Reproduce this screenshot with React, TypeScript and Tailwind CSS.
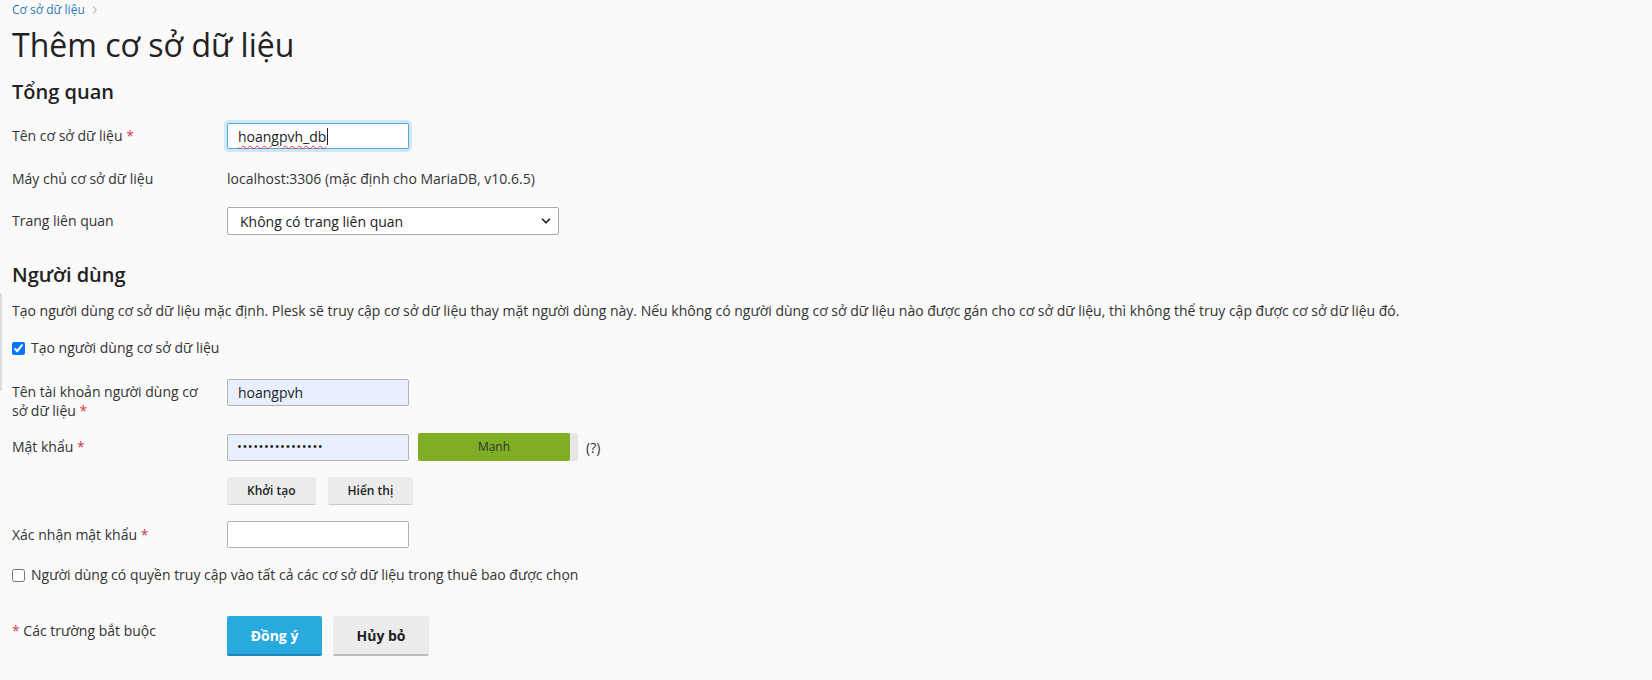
import { ChevronRight, ChevronDown } from "lucide-react";

const font = { fontFamily: '"Open Sans", "Noto Sans", sans-serif' };

function Req() {
  return <span className="text-[#d23f4f]"> *</span>;
}

function Row({ label, children }: { label: React.ReactNode; children: React.ReactNode }) {
  return (
    <div className="flex items-center">
      <div className="w-[215px] shrink-0 pr-6 text-[14px] leading-[20px] text-[#333]">{label}</div>
      <div className="flex items-center">{children}</div>
    </div>
  );
}

function GrayButton({ text, size = "sm" }: { text: string; size?: "sm" | "lg" }) {
  if (size === "lg") {
    return (
      <button className="h-[40px] w-[96px] rounded-[2px] border-b-2 border-b-[#bdbdbd] bg-[#ececec] text-[14px] font-bold text-[#222]">
        {text}
      </button>
    );
  }
  return (
    <button className="h-[28px] rounded-[2px] border-b border-b-[#c9c9c9] bg-[#ececec] px-[20px] text-[12px] font-semibold text-[#222]">
      {text}
    </button>
  );
}

export default function App() {
  return (
    <div style={font} className="relative min-h-[680px] w-full bg-[#fafafa] pl-3 text-[#222]">
      <div className="absolute left-0 top-[293px] h-[98px] w-[2px] bg-[#dedede]" />

      {/* breadcrumb */}
      <div className="flex items-center gap-1 pt-[2px] text-[12px] leading-[16px] text-[#2b7bb3]">
        <span>Cơ sở dữ liệu</span>
        <ChevronRight size={12} className="text-[#999]" />
      </div>

      <h1 className="mt-[5px] text-[32px] font-normal leading-[44px] text-[#222]">Thêm cơ sở dữ liệu</h1>

      <h2 className="mt-[11px] text-[20px] font-semibold leading-[28px] text-[#222]">Tổng quan</h2>

      <div className="mt-[17px]">
        <Row label={<>Tên cơ sở dữ liệu<Req /></>}>
          <div className="flex h-[26px] w-[182px] items-center rounded-[2px] border border-[#5ba9dc] bg-white px-[10px] text-[14px] text-[#222] shadow-[0_0_0_3px_#cfe7f8]">
            <span className="underline decoration-[#e0383e] decoration-wavy decoration-1 underline-offset-[3px]">hoangpvh_db</span>
            <span className="ml-[1px] h-[17px] w-[1px] bg-[#222]" />
          </div>
        </Row>
      </div>

      <div className="mt-[20px]">
        <Row label="Máy chủ cơ sở dữ liệu">
          <span className="text-[14px] leading-[20px] text-[#333]">localhost:3306 (mặc định cho MariaDB, v10.6.5)</span>
        </Row>
      </div>

      <div className="mt-[18px]">
        <Row label="Trang liên quan">
          <div className="flex h-[28px] w-[332px] items-center justify-between rounded-[2px] border border-[#a9a9a9] bg-white pl-[12px] pr-[5px] text-[14px] text-[#222]">
            <span>Không có trang liên quan</span>
            <ChevronDown size={14} strokeWidth={3} className="text-[#222]" />
          </div>
        </Row>
      </div>

      <h2 className="mt-[26px] text-[20px] font-semibold leading-[28px] text-[#222]">Người dùng</h2>

      <p className="mt-[12px] text-[14px] leading-[20px] text-[#333]">
        Tạo người dùng cơ sở dữ liệu mặc định. Plesk sẽ truy cập cơ sở dữ liệu thay mặt người dùng này. Nếu không có người dùng cơ sở dữ liệu nào được gán cho cơ sở dữ liệu, thì không thể truy cập được cơ sở dữ liệu đó.
      </p>

      <label className="mt-[17px] flex items-center gap-[6px] text-[14px] leading-[20px] text-[#333]">
        <input type="checkbox" defaultChecked className="m-0 h-[13px] w-[13px] accent-[#0075ff]" />
        Tạo người dùng cơ sở dữ liệu
      </label>

      <div className="mt-[21px] flex items-start">
        <div className="w-[215px] shrink-0 pr-6 pt-[3px] text-[14px] leading-[19px] text-[#333]">
          Tên tài khoản người dùng cơ sở dữ liệu<Req />
        </div>
        <div className="flex h-[27px] w-[182px] items-center rounded-[2px] border border-[#b3b3b3] bg-[#e8f0fe] px-[10px] text-[14px] text-[#222]">
          hoangpvh
        </div>
      </div>

      <div className="mt-[13px]">
        <Row label={<>Mật khẩu<Req /></>}>
          <div className="flex h-[27px] w-[182px] items-center rounded-[2px] border border-[#b3b3b3] bg-[#e8f0fe] px-[9px] text-[13px] tracking-[0.5px] text-[#222]">
            ••••••••••••••••
          </div>
          <div className="ml-[9px] flex h-[28px] w-[160px] rounded-[2px] bg-[#e6e6e6]">
            <div className="flex w-[152px] items-center justify-center rounded-[2px] bg-[#7fad24] text-[12px] text-[#333]">Mạnh</div>
          </div>
          <span className="ml-[8px] text-[14px] text-[#333]">(?)</span>
        </Row>
      </div>

      <div className="ml-[215px] mt-[16px] flex gap-[12px]">
        <GrayButton text="Khởi tạo" />
        <GrayButton text="Hiển thị" />
      </div>

      <div className="mt-[16px]">
        <Row label={<>Xác nhận mật khẩu<Req /></>}>
          <div className="h-[27px] w-[182px] rounded-[2px] border border-[#b3b3b3] bg-white" />
        </Row>
      </div>

      <label className="mt-[17px] flex items-center gap-[6px] text-[14px] leading-[20px] text-[#333]">
        <input type="checkbox" className="m-0 h-[13px] w-[13px]" />
        Người dùng có quyền truy cập vào tất cả các cơ sở dữ liệu trong thuê bao được chọn
      </label>

      <div className="mt-[31px] flex items-start">
        <div className="w-[215px] shrink-0 pt-[5px] text-[14px] leading-[20px] text-[#333]">
          <span className="text-[#d23f4f]">* </span>Các trường bắt buộc
        </div>
        <div className="flex gap-[11px]">
          <button className="h-[40px] w-[95px] rounded-[2px] border-b-2 border-b-[#1f88b6] bg-[#28aade] text-[14px] font-bold text-white">
            Đồng ý
          </button>
          <GrayButton text="Hủy bỏ" size="lg" />
        </div>
      </div>
    </div>
  );
}
